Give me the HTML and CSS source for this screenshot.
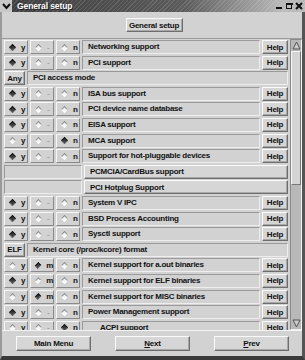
FILE: index.html
```html
<!DOCTYPE html>
<html lang="en">
<head>
    <meta charset="UTF-8">
    <title>General setup</title>
    <link rel="stylesheet" href="styles.css">
</head>
<body>
    <div class="window">
        <div class="titlebar">
            <span class="menu-icon"><svg width="9" height="8" viewBox="0 0 9 8"><path d="M1 2 L4.5 6 L8 2" fill="none" stroke="#111" stroke-width="2"/></svg></span>
            <span class="title">General setup</span>
            <span class="winbtns">
                <span class="wb"><svg width="8" height="8"><rect x="1" y="5" width="6" height="2" fill="#111"/></svg></span>
                <span class="wb"><svg width="8" height="8"><rect x="1.5" y="1.5" width="5" height="5" fill="none" stroke="#111"/><rect x="1" y="1" width="7" height="2" fill="#111"/></svg></span>
                <span class="wb"><svg width="8" height="8"><path d="M1 1 L7 7 M7 1 L1 7" stroke="#111" stroke-width="2"/></svg></span>
            </span>
        </div>

        <div class="header">
            <button class="btn head-btn">General setup</button>
        </div>

        <div class="content">
            <div class="list">
                <div class="row"><div class="opt on">y</div><div class="opt dis">-</div><div class="opt">n</div><div class="label">Networking support</div><button class="btn help">Help</button></div>
                <div class="row"><div class="opt on">y</div><div class="opt dis">-</div><div class="opt">n</div><div class="label">PCI support</div><button class="btn help">Help</button></div>
                <div class="row"><button class="btn choice">Any</button><div class="label wide">PCI access mode</div></div>
                <div class="row"><div class="opt on">y</div><div class="opt dis">-</div><div class="opt">n</div><div class="label">ISA bus support</div><button class="btn help">Help</button></div>
                <div class="row"><div class="opt on">y</div><div class="opt dis">-</div><div class="opt">n</div><div class="label">PCI device name database</div><button class="btn help">Help</button></div>
                <div class="row"><div class="opt on">y</div><div class="opt dis">-</div><div class="opt">n</div><div class="label">EISA support</div><button class="btn help">Help</button></div>
                <div class="row"><div class="opt">y</div><div class="opt dis">-</div><div class="opt on">n</div><div class="label">MCA support</div><button class="btn help">Help</button></div>
                <div class="row"><div class="opt on">y</div><div class="opt dis">-</div><div class="opt">n</div><div class="label">Support for hot-pluggable devices</div><button class="btn help">Help</button></div>
                <div class="row"><div class="blank"></div><button class="btn submenu">PCMCIA/CardBus support</button></div>
                <div class="row"><div class="blank"></div><button class="btn submenu">PCI Hotplug Support</button></div>
                <div class="row"><div class="opt on">y</div><div class="opt dis">-</div><div class="opt">n</div><div class="label">System V IPC</div><button class="btn help">Help</button></div>
                <div class="row"><div class="opt on">y</div><div class="opt dis">-</div><div class="opt">n</div><div class="label">BSD Process Accounting</div><button class="btn help">Help</button></div>
                <div class="row"><div class="opt on">y</div><div class="opt dis">-</div><div class="opt">n</div><div class="label">Sysctl support</div><button class="btn help">Help</button></div>
                <div class="row"><button class="btn choice">ELF</button><div class="label wide">Kernel core (/proc/kcore) format</div></div>
                <div class="row"><div class="opt">y</div><div class="opt on">m</div><div class="opt">n</div><div class="label">Kernel support for a.out binaries</div><button class="btn help">Help</button></div>
                <div class="row"><div class="opt on">y</div><div class="opt">m</div><div class="opt">n</div><div class="label">Kernel support for ELF binaries</div><button class="btn help">Help</button></div>
                <div class="row"><div class="opt">y</div><div class="opt on">m</div><div class="opt">n</div><div class="label">Kernel support for MISC binaries</div><button class="btn help">Help</button></div>
                <div class="row"><div class="opt on">y</div><div class="opt dis">-</div><div class="opt">n</div><div class="label">Power Management support</div><button class="btn help">Help</button></div>
                <div class="row"><div class="opt">y</div><div class="opt dis">-</div><div class="opt on">n</div><div class="label indent">ACPI support</div><button class="btn help">Help</button></div>
            </div>
            <div class="scrollbar">
                <div class="arrow"><svg width="9" height="9"><path d="M4.5 1 L8 8 L1 8 Z" fill="#ccc" stroke="#555"/></svg></div>
                <div class="trough"><div class="thumb"></div></div>
                <div class="arrow"><svg width="9" height="9"><path d="M4.5 8 L8 1 L1 1 Z" fill="#ccc" stroke="#555"/></svg></div>
            </div>
        </div>

        <div class="footer">
            <button class="btn foot-btn">Main Menu</button>
            <button class="btn foot-btn"><u>N</u>ext</button>
            <button class="btn foot-btn"><u>P</u>rev</button>
        </div>
    </div>
</body>
</html>
```

FILE: styles.css
```css
body { margin: 0; width: 305px; height: 360px; overflow: hidden; background: #d2d2d2; font: bold 8px "Liberation Sans", Arial, sans-serif; color: #111; letter-spacing: -0.25px; }
.window { height: 360px; box-sizing: border-box; display: flex; flex-direction: column; border-left: 2px solid #9a9a9a; border-right: 3px solid #555; border-bottom: 4px solid #3a3a3a; }

.titlebar { height: 12px; flex: none; display: flex; align-items: center; background: repeating-linear-gradient(135deg, rgba(255,255,255,0.12) 0 1px, rgba(0,0,0,0) 1px 3px), linear-gradient(90deg, #3c3c3c 0%, #5a5a5a 60%, #b8b8b8 92%); margin-left: -2px; margin-right: -3px; }
.menu-icon { width: 12px; height: 12px; background: #c8c8c8; display: flex; align-items: center; justify-content: center; }
.title { color: #fff; font-size: 8.5px; margin-left: 5px; flex: 1; text-shadow: 1px 1px 0 #222; letter-spacing: -0.1px; }
.winbtns { display: flex; gap: 1px; padding-right: 2px; }
.wb { width: 9px; height: 10px; display: flex; align-items: center; justify-content: center; }

.btn { font: inherit; letter-spacing: inherit; color: #111; background: #d6d6d6; border: 1px solid; border-color: #fafafa #6e6e6e #6e6e6e #fafafa; box-shadow: inset -1px -1px 0 #a8a8a8; padding: 0; margin: 0; cursor: pointer; }

.header { height: 26px; flex: none; display: flex; justify-content: center; align-items: center; }
.head-btn { width: 57px; height: 14px; margin-left: 4px; }

.content { height: 291px; flex: none; display: flex; padding-left: 1px; border-top: 1px solid #9c9c9c; }
.list { width: 286px; overflow: hidden; display: flex; flex-direction: column; gap: 1.6px; padding-top: 1px; }
.row { height: 14px; flex: none; display: flex; gap: 2px; padding-left: 1px; }

.opt { width: 24px; box-sizing: border-box; border: 1px solid; border-color: #f6f6f6 #8a8a8a #8a8a8a #f6f6f6; display: flex; align-items: center; padding-left: 5px; gap: 6px; }
.opt::before { content: ""; width: 3px; height: 3px; transform: rotate(45deg); background: #f4f4f4; border: 1px solid; border-color: #8a8a8a #fff #fff #8a8a8a; }
.opt.on::before { background: #3a3a3a; border-color: #111 #666 #666 #111; }
.opt.dis { color: #a4a4a4; }

.label { flex: 1; box-sizing: border-box; border: 1px solid; border-color: #9a9a9a #eeeeee #eeeeee #9a9a9a; padding-left: 5px; line-height: 12px; white-space: nowrap; overflow: hidden; }
.label.indent { padding-left: 17px; }
.help { width: 26px; }
.choice { width: 21px; }
.blank { width: 78px; box-sizing: border-box; border: 1px solid; border-color: #9a9a9a #eeeeee #eeeeee #9a9a9a; }
.submenu { flex: 1; text-align: left; padding-left: 5px; }

.scrollbar { width: 10px; margin-left: 2px; display: flex; flex-direction: column; border: 1px solid; border-color: #8a8a8a #f4f4f4 #f4f4f4 #8a8a8a; background: #b8b8b8; }
.arrow { height: 11px; display: flex; align-items: center; justify-content: center; }
.trough { flex: 1; }
.thumb { height: 134px; background: #d4d4d4; border: 1px solid; border-color: #f6f6f6 #777 #777 #f6f6f6; box-sizing: border-box; }

.footer { flex: 1; display: flex; align-items: center; justify-content: space-between; padding: 0 13px 0 14px; border-top: 1px solid #f4f4f4; }
.foot-btn { width: 75px; height: 15px; }
```
